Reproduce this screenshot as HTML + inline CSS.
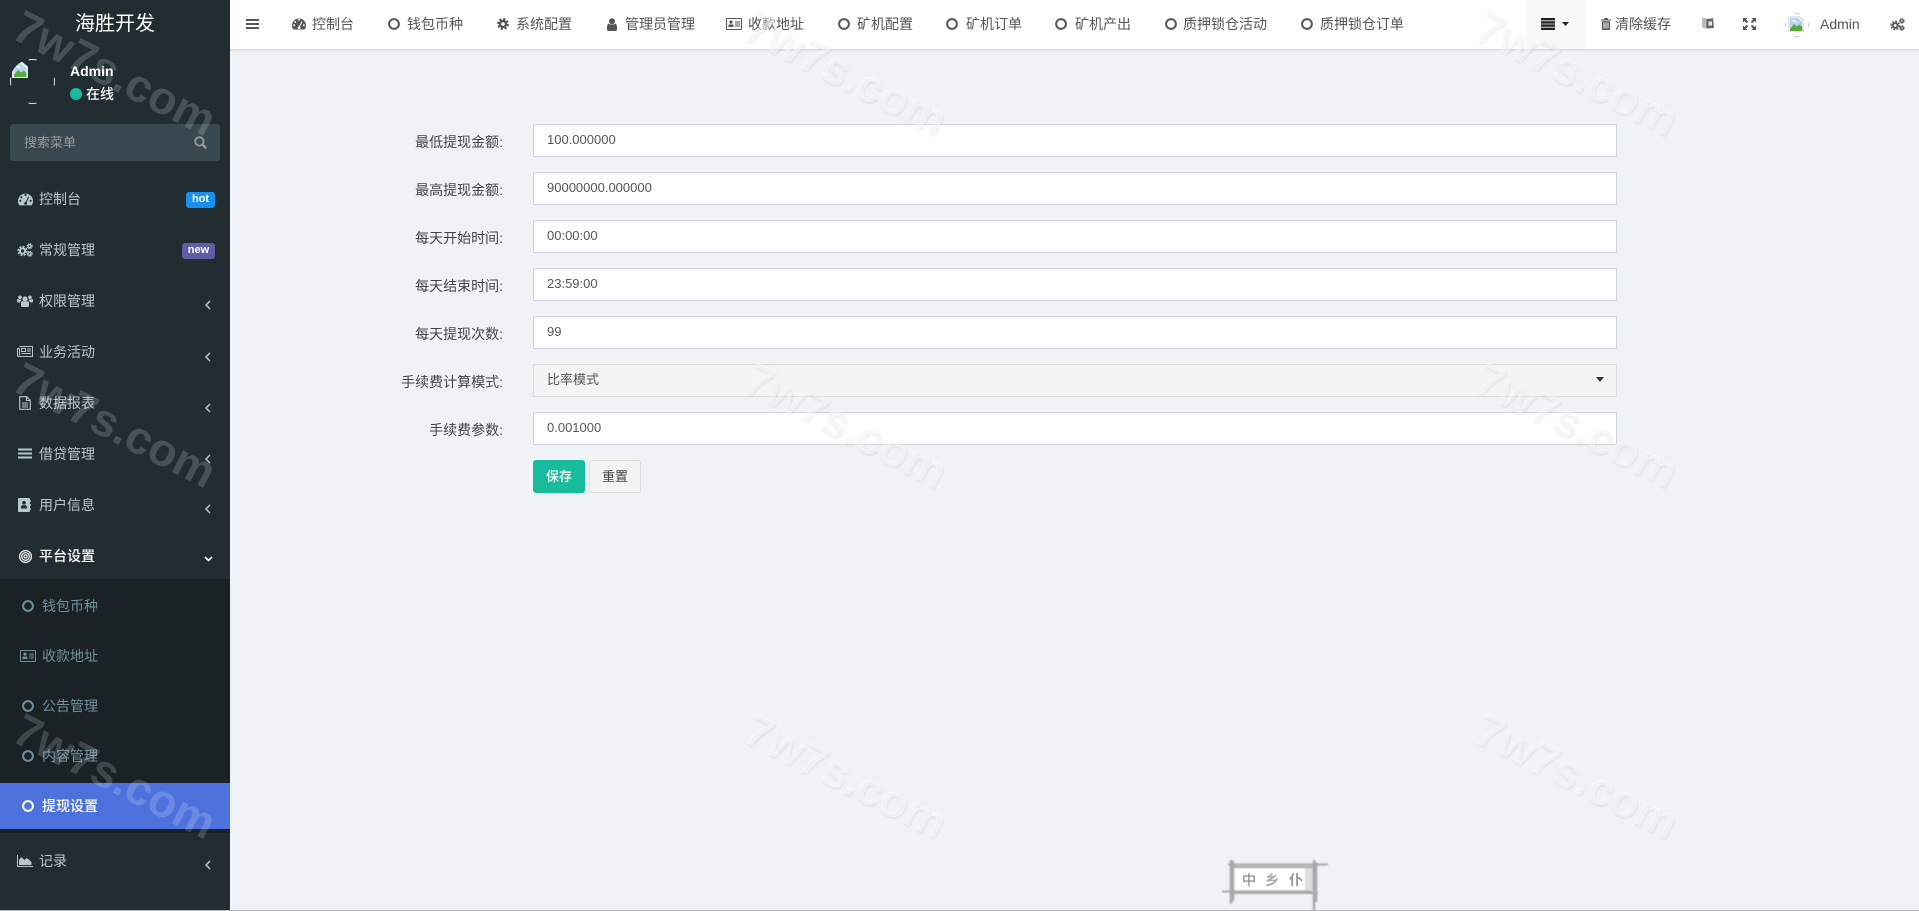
<!DOCTYPE html>
<html lang="zh"><head><meta charset="utf-8"><title>提现设置</title>
<style>
*{box-sizing:border-box}
html,body{margin:0;padding:0;width:1919px;height:911px;overflow:hidden;background:#f0f3f6;font-family:"Liberation Sans","Noto Sans CJK SC",sans-serif;font-size:14px;color:#333}
.a{position:absolute;white-space:nowrap;line-height:20px}
svg{position:absolute;display:block;overflow:visible}
#side{position:absolute;left:0;top:0;width:230px;height:910px;background:#222d32}
#tree{position:absolute;left:0;top:579px;width:230px;height:254px;background:#1a2226}
#act{position:absolute;left:0;top:783px;width:230px;height:46px;background:#4d72de}
#nav{position:absolute;left:230px;top:0;width:1689px;height:49px;background:#fff;box-shadow:0 1px 2px rgba(0,0,0,.14)}
.m{color:#b8c7ce}.t{color:#6f909f}
.n{color:#555}
.f{position:absolute;left:533px;width:1084px;height:33px;background:#fff;border:1px solid #d2d6de;padding-left:13px;font-size:13px;line-height:29px;color:#555;white-space:nowrap}
.l{position:absolute;right:1416px;font-size:14px;line-height:20px;color:#444;white-space:nowrap}
.b{position:absolute;top:460px;height:33px;border-radius:3px;font-size:13px;line-height:31px;text-align:center}
.w{position:absolute;font-size:46px;font-weight:700;line-height:60px;white-space:nowrap;transform:translate(-50%,-50%) rotate(27deg);pointer-events:none}
.d{color:rgba(255,255,255,.17)}
.g{color:rgba(255,255,255,.5);text-shadow:1px 1px 2px rgba(0,0,0,.07)}
.chev{fill:none;stroke:#b8c7ce;stroke-width:1.5}
</style></head><body>
<svg width="0" height="0" style="position:absolute"><defs>
<symbol id="dash" viewBox="0 0 14 12"><path fill-rule="evenodd" d="M7 0.5A7 7 0 0 0 0 7.5c0 1.6.5 3 1.4 4h11.2c.9-1 1.4-2.4 1.4-4A7 7 0 0 0 7 0.5zM3.2 3a1 1 0 1 1 0 2 1 1 0 0 1 0-2zM6 1.8a1 1 0 1 1 2 0 1 1 0 0 1-2 0zM1.2 7.2a1 1 0 1 1 2 0 1 1 0 0 1-2 0zM10.8 7.2a1 1 0 1 1 2 0 1 1 0 0 1-2 0zM9.6 3.2l.9.5L8 8.6a1.4 1.4 0 1 1-1-.3z" fill="currentColor"/></symbol>
<symbol id="ring" viewBox="0 0 12 12"><circle cx="6" cy="6" r="4.9" fill="none" stroke="currentColor" stroke-width="2"/></symbol>
<symbol id="cogs" viewBox="0 0 16 14"><g fill="none" stroke="currentColor"><circle cx="5.5" cy="8" r="2.6" stroke-width="2"/><circle cx="5.5" cy="8" r="4.4" stroke-width="1.6" stroke-dasharray="2 1.45"/><circle cx="12.7" cy="3.2" r="1.5" stroke-width="1.3"/><circle cx="12.7" cy="3.2" r="2.5" stroke-width="1" stroke-dasharray="1.2 .76"/><circle cx="12.7" cy="10.8" r="1.5" stroke-width="1.3"/><circle cx="12.7" cy="10.8" r="2.5" stroke-width="1" stroke-dasharray="1.2 .76"/></g></symbol>
<symbol id="cog" viewBox="0 0 12 12"><g fill="none" stroke="currentColor"><circle cx="6" cy="6" r="3" stroke-width="2.4"/><circle cx="6" cy="6" r="5" stroke-width="1.8" stroke-dasharray="2.2 1.73"/></g></symbol>
<symbol id="user" viewBox="0 0 10 13"><circle cx="5" cy="3.2" r="3" fill="currentColor"/><path d="M1.5 5.5C.5 6 0 7.5 0 10v1.5C0 12.4.6 13 1.5 13h7c.9 0 1.5-.6 1.5-1.5V10c0-2.500-.5-4-1.500-4.500C7.500 7 2.500 7 1.500 5.500z" fill="currentColor"/></symbol>
<symbol id="users" viewBox="0 0 16 12"><g fill="currentColor"><circle cx="8" cy="4" r="2.600"/><circle cx="3" cy="2.300" r="1.800"/><circle cx="13" cy="2.300" r="1.800"/><path d="M4 7.500c0-1 .8-1.400 1.600-1.400C6.300 7 9.700 7 10.400 6.100c.8 0 1.600.4 1.600 1.400v3c0 .8-.6 1.500-1.500 1.500h-5C4.600 12 4 11.300 4 10.500z"/><path d="M0 5c0-.7.500-1 1-1 .5.600 2 .7 2.600.2.300.6.600 1 1 1.300C3.500 5.800 3 6.500 3 7.500H1C.4 7.500 0 7 0 6.500zM16 5c0-.7-.5-1-1-1-.5.600-2 .7-2.600.2-.3.6-.6 1-1 1.300 1.100.3 1.600 1 1.600 2h2c.6 0 1-.5 1-1z"/></g></symbol>
<symbol id="news" viewBox="0 0 16 11"><g fill="none" stroke="currentColor"><path d="M2.500 .5h13v10H1.500c-.6 0-1-.5-1-1V2.500h2v7" stroke-width="1"/><path d="M4.500 2.500h4v3h-4z" stroke-width="1"/><path d="M10 3h4M10 5h4M4.500 7.500h9.500" stroke-width="1"/></g></symbol>
<symbol id="file" viewBox="0 0 12 14"><path d="M.7.7h7l3.600 3.600v9H.7zM7.500.7v3.800h3.800M3 7h6M3 9h6M3 11h6" fill="none" stroke="currentColor" stroke-width="1.100"/></symbol>
<symbol id="list" viewBox="0 0 14 11"><path d="M0 .5h14v2H0zM0 4.500h14v2H0zM0 8.500h14v2H0z" fill="currentColor"/></symbol>
<symbol id="book" viewBox="0 0 13 14"><path fill-rule="evenodd" fill="currentColor" d="M0 1c0-.6.400-1 1-1h10c.6 0 1 .4 1 1v12c0 .6-.4 1-1 1H1c-.6 0-1-.4-1-1zM6 3a1.800 1.800 0 1 0 0 3.600A1.800 1.800 0 0 0 6 3zM3 9.500c0-1.300.8-2.300 1.700-2.500.8.500 1.800.500 2.600 0 .9.200 1.700 1.200 1.700 2.500V10.500H3z"/><path d="M12.300 2h.7v2h-.7zM12.300 6h.7v2h-.7zM12.300 10h.7v2h-.7z" fill="currentColor"/></symbol>
<symbol id="bull" viewBox="0 0 13 13"><g fill="none" stroke="currentColor" stroke-width="1.200"><circle cx="6.500" cy="6.500" r="5.900"/><circle cx="6.500" cy="6.500" r="3.800"/><circle cx="6.500" cy="6.500" r="1.600"/></g></symbol>
<symbol id="card" viewBox="0 0 16 12"><path fill-rule="evenodd" fill="currentColor" d="M1 0h14c.6 0 1 .4 1 1v10c0 .6-.4 1-1 1H1c-.6 0-1-.4-1-1V1c0-.6.400-1 1-1zm0 1v10h14V1zM5 2.500a1.600 1.600 0 1 1 0 3.200 1.600 1.600 0 0 1 0-3.200zM2.300 9c0-1.500.7-2.500 1.400-2.700.8.400 1.800.4 2.600 0C7 6.500 7.700 7.500 7.700 9zM9 3.500h5v1H9zM9 5.500h5v1H9zM9 7.500h5v1H9z"/></symbol>
<symbol id="area" viewBox="0 0 16 12"><path d="M0 0h1v11h15v1H0z" fill="currentColor"/><path d="M2 10V5l2.500-3 3 3 2-2 3 2 2 2.500V10z" fill="currentColor"/></symbol>
<symbol id="burger" viewBox="0 0 13 10"><path d="M0 0h13v2H0zM0 4h13v2H0zM0 8h13v2H0z" fill="currentColor"/></symbol>
<symbol id="search" viewBox="0 0 12 12"><circle cx="5" cy="5" r="3.900" fill="none" stroke="currentColor" stroke-width="1.700"/><path d="M8 8l3.300 3.300" stroke="currentColor" stroke-width="2.200" fill="none"/></symbol>
<symbol id="trash" viewBox="0 0 10 12"><path fill="currentColor" d="M3.500 0h3l.6 1.500H10v1H0v-1h2.900zM1 3.200h8V11c0 .6-.4 1-1 1H2c-.6 0-1-.4-1-1zM2.500 4.500v6h1v-6zM4.500 4.500v6h1v-6zM6.500 4.500v6h1v-6z" fill-rule="evenodd"/></symbol>
<symbol id="expand" viewBox="0 0 13 12"><g fill="currentColor"><path d="M0 0h4.500L3 1.500 5.200 3.800 3.800 5.200 1.500 3 0 4.500zM13 0H8.500L10 1.500 7.800 3.800 9.200 5.200 11.500 3 13 4.500zM0 12h4.500L3 10.500 5.200 8.200 3.800 6.800 1.500 9 0 7.500zM13 12H8.500L10 10.500 7.800 8.200 9.200 6.800 11.500 9 13 7.500z"/></g></symbol>
<symbol id="broken" viewBox="0 0 16 16"><path d="M0 0h10l6 5v11H0z" fill="#fff" stroke="#bbb" stroke-width=".8"/><path d="M1.500 1.500h8l5 4.500v8.500h-13z" fill="#b9d3f0"/><path d="M2 13l4-5 3 2.500 2.500-2 3 2.500v4h-12.500z" fill="#58a83a"/><path d="M4 4.500c2-1 4 0 5 1-1.500.5-3.500.5-5-1z" fill="#fff"/></symbol>
<filter id="bl"><feGaussianBlur stdDeviation=".7"/></filter>
</defs></svg>

<div id="side"></div>
<div id="tree"></div>
<div id="act"></div>
<div class="a" style="left:75px;top:11px;width:80px;font-size:20px;line-height:26px;color:#fff">海胜开发</div>

<svg style="left:10px;top:59px" width="45" height="45" viewBox="0 0 45 45"><circle cx="22.500" cy="22.500" r="22" fill="none" stroke="#dfe3e5" stroke-width="1" stroke-dasharray="8 26.550" stroke-dashoffset="4"/></svg>
<div class="a" style="left:10px;top:59px;width:45px;height:45px;border-radius:50%;overflow:hidden"><svg style="left:2px;top:3px" width="16" height="16"><use href="#broken"/></svg></div>
<div class="a" style="left:70px;top:61px;color:#fff;font-weight:700">Admin</div>
<div class="a" style="left:70px;top:88px;width:12px;height:12px;border-radius:50%;background:#18bc9c"></div>
<div class="a" style="left:86px;top:84px;color:#fff;font-weight:500;line-height:20px">在线</div>

<div class="a" style="left:10px;top:124px;width:210px;height:37px;background:#374850;border-radius:3px"></div>
<div class="a" style="left:24px;top:133px;font-size:13px;color:#999">搜索菜单</div>
<svg style="left:194px;top:136px;color:#999" width="13" height="13"><use href="#search"/></svg>

<svg class="m" style="left:18px;top:193px;color:#b8c7ce" width="15" height="13"><use href="#dash"/></svg>
<div class="a m" style="left:39px;top:189px">控制台</div>
<div class="a" style="left:186px;top:192px;width:29px;height:16px;background:#1890f0;border-radius:3px;color:#fff;font-size:11px;font-weight:700;line-height:14px;text-align:center">hot</div>
<svg style="left:17px;top:243px;color:#b8c7ce" width="16" height="14"><use href="#cogs"/></svg>
<div class="a m" style="left:39px;top:240px">常规管理</div>
<div class="a" style="left:182px;top:243px;width:33px;height:16px;background:#605ca8;border-radius:3px;color:#fff;font-size:11px;font-weight:700;line-height:14px;text-align:center">new</div>
<svg style="left:17px;top:295px;color:#b8c7ce" width="16" height="12"><use href="#users"/></svg>
<div class="a m" style="left:39px;top:291px">权限管理</div>
<svg style="left:17px;top:346px;color:#b8c7ce" width="16" height="11"><use href="#news"/></svg>
<div class="a m" style="left:39px;top:342px">业务活动</div>
<svg style="left:19px;top:396px;color:#b8c7ce" width="12" height="14"><use href="#file"/></svg>
<div class="a m" style="left:39px;top:393px">数据报表</div>
<svg style="left:18px;top:448px;color:#b8c7ce" width="14" height="11"><use href="#list"/></svg>
<div class="a m" style="left:39px;top:444px">借贷管理</div>
<svg style="left:18px;top:498px;color:#b8c7ce" width="13" height="14"><use href="#book"/></svg>
<div class="a m" style="left:39px;top:495px">用户信息</div>
<svg style="left:19px;top:550px;color:#fff" width="13" height="13"><use href="#bull"/></svg>
<div class="a" style="left:39px;top:546px;color:#fff;font-weight:500">平台设置</div>

<svg style="left:205px;top:300px" width="6" height="10"><path class="chev" d="M5 1L1 5l4 4"/></svg>
<svg style="left:205px;top:352px" width="6" height="10"><path class="chev" d="M5 1L1 5l4 4"/></svg>
<svg style="left:205px;top:403px" width="6" height="10"><path class="chev" d="M5 1L1 5l4 4"/></svg>
<svg style="left:205px;top:454px" width="6" height="10"><path class="chev" d="M5 1L1 5l4 4"/></svg>
<svg style="left:205px;top:504px" width="6" height="10"><path class="chev" d="M5 1L1 5l4 4"/></svg>
<svg style="left:205px;top:860px" width="6" height="10"><path class="chev" d="M5 1L1 5l4 4"/></svg>
<svg style="left:204px;top:556px" width="9" height="6"><path d="M1 1l3.500 3.500L8 1" fill="none" stroke="#fff" stroke-width="1.600"/></svg>

<svg style="left:22px;top:600px;color:#6f909f" width="12" height="12"><use href="#ring"/></svg>
<div class="a t" style="left:42px;top:596px">钱包币种</div>
<svg style="left:20px;top:650px;color:#6f909f" width="16" height="12"><use href="#card"/></svg>
<div class="a t" style="left:42px;top:646px">收款地址</div>
<svg style="left:22px;top:700px;color:#6f909f" width="12" height="12"><use href="#ring"/></svg>
<div class="a t" style="left:42px;top:696px">公告管理</div>
<svg style="left:22px;top:750px;color:#6f909f" width="12" height="12"><use href="#ring"/></svg>
<div class="a t" style="left:42px;top:746px">内容管理</div>
<svg style="left:22px;top:800px;color:#fff" width="12" height="12"><use href="#ring"/></svg>
<div class="a" style="left:42px;top:796px;color:#fff;font-weight:500">提现设置</div>
<svg style="left:17px;top:855px;color:#b8c7ce" width="16" height="12"><use href="#area"/></svg>
<div class="a m" style="left:39px;top:851px">记录</div>

<div id="nav"></div>
<div class="a" style="left:1527px;top:0;width:58px;height:49px;background:#f8f8f8"></div>
<svg style="left:246px;top:19px;color:#555" width="13" height="10"><use href="#burger"/></svg>
<svg style="left:292px;top:18px;color:#555" width="14" height="12"><use href="#dash"/></svg>
<div class="a n" style="left:312px;top:14px">控制台</div>
<svg style="left:388px;top:18px;color:#555" width="12" height="12"><use href="#ring"/></svg>
<div class="a n" style="left:407px;top:14px">钱包币种</div>
<svg style="left:497px;top:18px;color:#555" width="12" height="12"><use href="#cog"/></svg>
<div class="a n" style="left:516px;top:14px">系统配置</div>
<svg style="left:607px;top:18px;color:#555" width="10" height="13"><use href="#user"/></svg>
<div class="a n" style="left:625px;top:14px">管理员管理</div>
<svg style="left:726px;top:18px;color:#555" width="16" height="12"><use href="#card"/></svg>
<div class="a n" style="left:748px;top:14px">收款地址</div>
<svg style="left:838px;top:18px;color:#555" width="12" height="12"><use href="#ring"/></svg>
<div class="a n" style="left:857px;top:14px">矿机配置</div>
<svg style="left:946px;top:18px;color:#555" width="12" height="12"><use href="#ring"/></svg>
<div class="a n" style="left:966px;top:14px">矿机订单</div>
<svg style="left:1055px;top:18px;color:#555" width="12" height="12"><use href="#ring"/></svg>
<div class="a n" style="left:1075px;top:14px">矿机产出</div>
<svg style="left:1165px;top:18px;color:#555" width="12" height="12"><use href="#ring"/></svg>
<div class="a n" style="left:1183px;top:14px">质押锁仓活动</div>
<svg style="left:1301px;top:18px;color:#555" width="12" height="12"><use href="#ring"/></svg>
<div class="a n" style="left:1320px;top:14px">质押锁仓订单</div>
<svg style="left:1541px;top:18px;color:#222" width="14" height="12" viewBox="0 0 14 12"><path d="M0 0h14v2.400H0zM0 3.200h14v2.400H0zM0 6.400h14v2.400H0zM0 9.600h14V12H0z" fill="#222"/></svg>
<svg style="left:1562px;top:22px" width="7" height="4"><path d="M0 0h7L3.500 4z" fill="#222"/></svg>
<svg style="left:1601px;top:18px;color:#555" width="10" height="12"><use href="#trash"/></svg>
<div class="a n" style="left:1615px;top:14px">清除缓存</div>
<svg style="left:1702px;top:17px" width="12" height="13" viewBox="0 0 12 13"><path d="M0 .5l6 1.500v10L0 10.500z" fill="#bbb"/><path d="M4.500 2l6.500-.7 1 9.700-7.500.5z" fill="#666"/><path d="M6.500 4.500h3.500v4H6.500z" fill="#e8e8e8"/></svg>
<svg style="left:1743px;top:18px;color:#555" width="13" height="12"><use href="#expand"/></svg>
<svg style="left:1785px;top:13px" width="24" height="24" viewBox="0 0 24 24"><circle cx="12" cy="12" r="11.500" fill="none" stroke="#ccc" stroke-dasharray="5 13" stroke-dashoffset="2.500"/></svg>
<svg style="left:1788px;top:16px" width="16" height="16"><use href="#broken"/></svg>
<div class="a n" style="left:1820px;top:14px">Admin</div>
<svg style="left:1890px;top:18px;color:#555" width="15" height="13"><use href="#cogs"/></svg>

<div class="l" style="top:132px">最低提现金额:</div><div class="f" style="top:124px">100.000000</div>
<div class="l" style="top:180px">最高提现金额:</div><div class="f" style="top:172px">90000000.000000</div>
<div class="l" style="top:228px">每天开始时间:</div><div class="f" style="top:220px">00:00:00</div>
<div class="l" style="top:276px">每天结束时间:</div><div class="f" style="top:268px">23:59:00</div>
<div class="l" style="top:324px">每天提现次数:</div><div class="f" style="top:316px">99</div>
<div class="l" style="top:372px">手续费计算模式:</div><div class="f" style="top:364px;background:#f4f4f4;border-color:#ddd">比率模式</div>
<svg style="left:1596px;top:377px" width="8" height="5"><path d="M0 0h8L4 5z" fill="#333"/></svg>
<div class="l" style="top:420px">手续费参数:</div><div class="f" style="top:412px">0.001000</div>
<div class="b" style="left:533px;width:52px;background:#18bc9c;color:#fff;border:1px solid #18bc9c;font-weight:500">保存</div>
<div class="b" style="left:589px;width:52px;background:#f4f4f4;color:#444;border:1px solid #ddd">重置</div>

<svg style="left:1220px;top:855px" width="120" height="56" viewBox="0 0 120 56">
<rect x="13" y="13" width="72" height="22" fill="#fff" filter="url(#bl)"/>
<rect x="85" y="13" width="9" height="22" fill="#ddd" filter="url(#bl)"/>
<g stroke="#777" fill="none" opacity=".6" filter="url(#bl)">
<path d="M8 9.500h100M12 12h84" stroke-width="2"/>
<path d="M2 36.500h90M10 38h88" stroke-width="2"/>
<path d="M11 5v44M13 6v40" stroke-width="2.500"/>
<path d="M94 5v51M96 7v40" stroke-width="2.500"/>
</g>
<text x="29" y="30" font-family="Liberation Sans,Noto Sans CJK SC,sans-serif" font-size="14" fill="#777" text-anchor="middle">中</text>
<text x="52" y="30" font-family="Liberation Sans,Noto Sans CJK SC,sans-serif" font-size="14" font-weight="700" fill="#aaa" text-anchor="middle">乡</text>
<text x="76" y="30" font-family="Liberation Sans,Noto Sans CJK SC,sans-serif" font-size="14" font-weight="700" fill="#999" text-anchor="middle">仆</text>
</svg>

<div class="a" style="left:0;top:910px;width:1919px;height:1px;background:#b4b9be"></div>

<div class="w d" style="left:115px;top:73px">7w7s.com</div>
<div class="w g" style="left:846px;top:73px">7w7s.com</div>
<div class="w g" style="left:1577px;top:73px">7w7s.com</div>
<div class="w d" style="left:115px;top:425px">7w7s.com</div>
<div class="w g" style="left:846px;top:425px">7w7s.com</div>
<div class="w g" style="left:1577px;top:425px">7w7s.com</div>
<div class="w d" style="left:115px;top:776px">7w7s.com</div>
<div class="w g" style="left:846px;top:776px">7w7s.com</div>
<div class="w g" style="left:1577px;top:776px">7w7s.com</div>
</body></html>
